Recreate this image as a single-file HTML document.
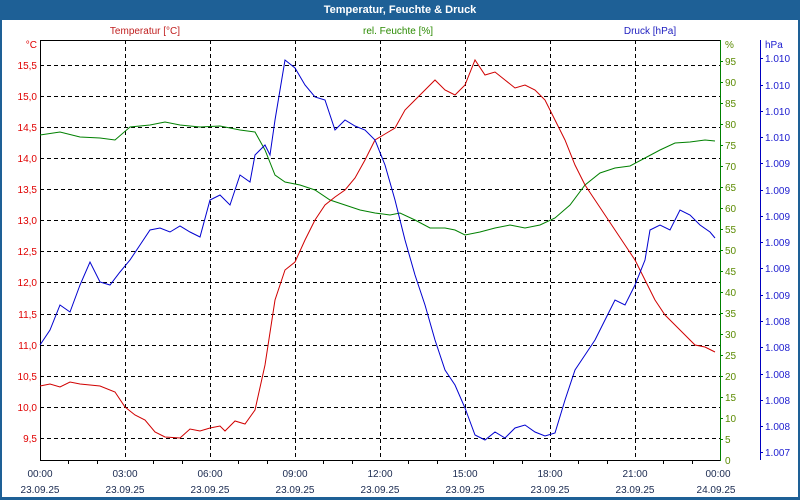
<!DOCTYPE html>
<html><head><meta charset="utf-8"><style>
html,body{margin:0;padding:0;background:#fff;}
svg{display:block;font-family:"Liberation Sans",Tahoma,sans-serif;}
</style></head><body>
<svg width="800" height="500" viewBox="0 0 800 500" xmlns="http://www.w3.org/2000/svg">
<rect x="0" y="0" width="800" height="500" fill="#1e6096"/>
<rect x="2" y="20" width="796" height="477" fill="#fff"/>
<text x="400" y="13" fill="#fff" font-size="11" font-weight="bold" text-anchor="middle">Temperatur, Feuchte &amp; Druck</text>
<text x="145" y="34" fill="#c02020" font-size="10" text-anchor="middle">Temperatur [°C]</text>
<text x="398" y="34" fill="#2a8a00" font-size="10" text-anchor="middle">rel. Feuchte [%]</text>
<text x="650" y="34" fill="#2020c0" font-size="10" text-anchor="middle">Druck [hPa]</text>
<g stroke="#000" stroke-width="1" stroke-dasharray="4,3" shape-rendering="crispEdges">
<line x1="125.5" y1="40" x2="125.5" y2="460"/><line x1="210.5" y1="40" x2="210.5" y2="460"/>
<line x1="295.5" y1="40" x2="295.5" y2="460"/><line x1="380.5" y1="40" x2="380.5" y2="460"/>
<line x1="465.5" y1="40" x2="465.5" y2="460"/><line x1="550.5" y1="40" x2="550.5" y2="460"/>
<line x1="635.5" y1="40" x2="635.5" y2="460"/>
<line x1="40" y1="65.5" x2="720" y2="65.5"/><line x1="40" y1="96.5" x2="720" y2="96.5"/>
<line x1="40" y1="127.5" x2="720" y2="127.5"/><line x1="40" y1="158.5" x2="720" y2="158.5"/>
<line x1="40" y1="189.5" x2="720" y2="189.5"/><line x1="40" y1="220.5" x2="720" y2="220.5"/>
<line x1="40" y1="251.5" x2="720" y2="251.5"/><line x1="40" y1="282.5" x2="720" y2="282.5"/>
<line x1="40" y1="314.5" x2="720" y2="314.5"/><line x1="40" y1="345.5" x2="720" y2="345.5"/>
<line x1="40" y1="376.5" x2="720" y2="376.5"/><line x1="40" y1="407.5" x2="720" y2="407.5"/>
<line x1="40" y1="438.5" x2="720" y2="438.5"/>
</g>
<g shape-rendering="crispEdges">
<line x1="40.5" y1="40" x2="40.5" y2="461" stroke="#000"/>
<line x1="40" y1="40.5" x2="720" y2="40.5" stroke="#000"/>
<line x1="40" y1="460.5" x2="720" y2="460.5" stroke="#000"/>
<line x1="720.5" y1="40" x2="720.5" y2="461" stroke="#008000"/>
<line x1="760.5" y1="40" x2="760.5" y2="460" stroke="#0000c0"/>
</g>
<g stroke="#000" shape-rendering="crispEdges">
<line x1="68.5" y1="460" x2="68.5" y2="464"/><line x1="97.5" y1="460" x2="97.5" y2="464"/>
<line x1="153.5" y1="460" x2="153.5" y2="464"/><line x1="182.5" y1="460" x2="182.5" y2="464"/>
<line x1="238.5" y1="460" x2="238.5" y2="464"/><line x1="267.5" y1="460" x2="267.5" y2="464"/>
<line x1="323.5" y1="460" x2="323.5" y2="464"/><line x1="352.5" y1="460" x2="352.5" y2="464"/>
<line x1="408.5" y1="460" x2="408.5" y2="464"/><line x1="437.5" y1="460" x2="437.5" y2="464"/>
<line x1="493.5" y1="460" x2="493.5" y2="464"/><line x1="522.5" y1="460" x2="522.5" y2="464"/>
<line x1="578.5" y1="460" x2="578.5" y2="464"/><line x1="607.5" y1="460" x2="607.5" y2="464"/>
<line x1="663.5" y1="460" x2="663.5" y2="464"/><line x1="692.5" y1="460" x2="692.5" y2="464"/>
</g>
<g fill="#e00000" font-size="10" text-anchor="end">
<text x="37" y="48">°C</text>
<text x="37" y="69">15,5</text><text x="37" y="100">15,0</text><text x="37" y="131">14,5</text>
<text x="37" y="162">14,0</text><text x="37" y="193">13,5</text><text x="37" y="224">13,0</text>
<text x="37" y="255">12,5</text><text x="37" y="286">12,0</text><text x="37" y="318">11,5</text>
<text x="37" y="349">11,0</text><text x="37" y="380">10,5</text><text x="37" y="411">10,0</text>
<text x="37" y="442">9,5</text>
</g>
<g fill="#5a8a00" font-size="10">
<text x="725" y="48">%</text>
<text x="725" y="65">95</text><text x="725" y="86">90</text><text x="725" y="107">85</text>
<text x="725" y="128">80</text><text x="725" y="149">75</text><text x="725" y="170">70</text>
<text x="725" y="191">65</text><text x="725" y="212">60</text><text x="725" y="233">55</text>
<text x="725" y="254">50</text><text x="725" y="275">45</text><text x="725" y="296">40</text>
<text x="725" y="317">35</text><text x="725" y="338">30</text><text x="725" y="359">25</text>
<text x="725" y="380">20</text><text x="725" y="401">15</text><text x="725" y="422">10</text>
<text x="725" y="443">5</text><text x="725" y="464">0</text>
</g>
<g stroke="#008000" shape-rendering="crispEdges">
<line x1="720" y1="61.5" x2="723" y2="61.5"/><line x1="720" y1="82.5" x2="723" y2="82.5"/><line x1="720" y1="103.5" x2="723" y2="103.5"/><line x1="720" y1="124.5" x2="723" y2="124.5"/><line x1="720" y1="145.5" x2="723" y2="145.5"/><line x1="720" y1="166.5" x2="723" y2="166.5"/><line x1="720" y1="187.5" x2="723" y2="187.5"/><line x1="720" y1="208.5" x2="723" y2="208.5"/><line x1="720" y1="229.5" x2="723" y2="229.5"/><line x1="720" y1="250.5" x2="723" y2="250.5"/><line x1="720" y1="271.5" x2="723" y2="271.5"/><line x1="720" y1="292.5" x2="723" y2="292.5"/><line x1="720" y1="313.5" x2="723" y2="313.5"/><line x1="720" y1="334.5" x2="723" y2="334.5"/><line x1="720" y1="355.5" x2="723" y2="355.5"/><line x1="720" y1="376.5" x2="723" y2="376.5"/><line x1="720" y1="397.5" x2="723" y2="397.5"/><line x1="720" y1="418.5" x2="723" y2="418.5"/><line x1="720" y1="439.5" x2="723" y2="439.5"/>
</g>
<g fill="#2020d0" font-size="10">
<text x="765" y="48">hPa</text>
<text x="765" y="62">1.010</text><text x="765" y="89">1.010</text><text x="765" y="115">1.010</text>
<text x="765" y="141">1.010</text><text x="765" y="167">1.009</text><text x="765" y="194">1.009</text>
<text x="765" y="220">1.009</text><text x="765" y="246">1.009</text><text x="765" y="272">1.009</text>
<text x="765" y="299">1.009</text><text x="765" y="325">1.008</text><text x="765" y="351">1.008</text>
<text x="765" y="378">1.008</text><text x="765" y="404">1.008</text><text x="765" y="430">1.008</text>
<text x="765" y="456">1.007</text>
</g>
<g stroke="#0000c0" shape-rendering="crispEdges">
<line x1="760" y1="58.5" x2="763" y2="58.5"/><line x1="760" y1="85.5" x2="763" y2="85.5"/><line x1="760" y1="111.5" x2="763" y2="111.5"/><line x1="760" y1="137.5" x2="763" y2="137.5"/><line x1="760" y1="163.5" x2="763" y2="163.5"/><line x1="760" y1="190.5" x2="763" y2="190.5"/><line x1="760" y1="216.5" x2="763" y2="216.5"/><line x1="760" y1="242.5" x2="763" y2="242.5"/><line x1="760" y1="268.5" x2="763" y2="268.5"/><line x1="760" y1="295.5" x2="763" y2="295.5"/><line x1="760" y1="321.5" x2="763" y2="321.5"/><line x1="760" y1="347.5" x2="763" y2="347.5"/><line x1="760" y1="374.5" x2="763" y2="374.5"/><line x1="760" y1="400.5" x2="763" y2="400.5"/><line x1="760" y1="426.5" x2="763" y2="426.5"/><line x1="760" y1="452.5" x2="763" y2="452.5"/>
</g>
<g fill="#1a2a50" font-size="10" text-anchor="middle">
<text x="40" y="477">00:00</text><text x="125" y="477">03:00</text><text x="210" y="477">06:00</text>
<text x="295" y="477">09:00</text><text x="380" y="477">12:00</text><text x="465" y="477">15:00</text>
<text x="550" y="477">18:00</text><text x="635" y="477">21:00</text><text x="718" y="477">00:00</text>
<text x="40" y="493">23.09.25</text><text x="125" y="493">23.09.25</text><text x="210" y="493">23.09.25</text>
<text x="295" y="493">23.09.25</text><text x="380" y="493">23.09.25</text><text x="465" y="493">23.09.25</text>
<text x="550" y="493">23.09.25</text><text x="635" y="493">23.09.25</text><text x="716" y="493">24.09.25</text>
</g>
<polyline fill="none" stroke="#008000" stroke-width="1" points="40,135 60,132 80,137 100,138 115,140 130,127 150,125 165,122 180,125 200,127 220,126 240,130 255,132 265,150 275,175 285,182 300,185 315,190 330,200 345,205 360,210 375,213 390,215 400,213 415,220 430,228 445,228 455,230 465,235 480,232 495,228 510,225 525,228 540,225 555,218 570,205 585,185 600,173 615,168 630,166 645,158 660,150 675,143 690,142 705,140 715,141"/>
<polyline fill="none" stroke="#d00000" stroke-width="1" points="40,386 50,384 60,387 70,382 80,384 100,386 115,392 125,407 135,415 145,420 155,432 165,437 180,438 190,429 200,431 210,428 220,426 225,431 235,421 245,424 255,410 265,365 275,300 285,270 295,262 305,240 315,220 325,205 335,197 345,190 355,178 365,160 375,140 385,134 395,128 405,110 415,100 425,90 435,80 445,90 455,95 465,85 475,60 485,75 495,72 505,80 515,88 525,85 535,90 545,100 555,120 565,140 575,165 585,185 595,200 605,215 615,230 625,245 635,260 645,280 655,300 665,315 675,325 685,335 695,345 705,347 715,352"/>
<polyline fill="none" stroke="#0000d0" stroke-width="1" points="40,345 50,330 60,305 70,312 80,285 90,262 100,282 110,285 120,272 130,260 140,245 150,230 160,228 170,232 180,226 190,232 200,237 210,200 220,195 230,205 240,175 250,182 255,155 265,145 270,155 275,120 285,60 295,68 305,85 315,97 325,100 335,130 345,120 355,126 365,130 375,140 385,165 395,200 405,240 415,275 425,305 435,340 445,370 455,385 465,408 475,435 485,440 495,432 505,438 515,428 525,425 535,432 545,436 555,433 565,400 575,370 585,355 595,340 605,320 615,300 625,305 635,285 645,260 650,230 660,225 670,230 680,210 690,215 700,225 710,232 715,238"/>
</svg>
</body></html>
